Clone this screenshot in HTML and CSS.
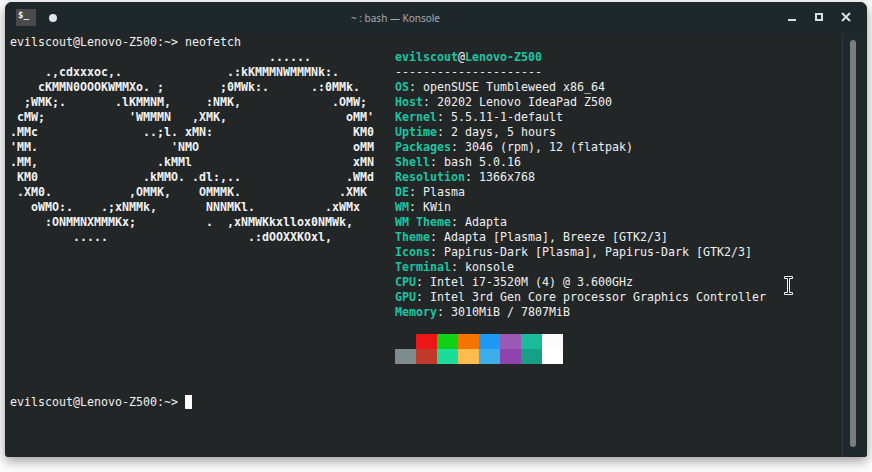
FILE: index.html
```html
<!DOCTYPE html>
<html lang="en">
<head>
<meta charset="utf-8">
<title>~ : bash — Konsole</title>
<link rel="stylesheet" href="styles.css">
</head>
<body>
<div class="window">
  <header class="titlebar">
    <div class="titlebar-left">
      <span class="app-icon">$_</span>
      <span class="pin"></span>
    </div>
    <div class="title">~ : bash — Konsole</div>
    <div class="controls">
      <svg class="ctl" width="10" height="10" viewBox="0 0 10 10"><rect x="1" y="7" width="8" height="2" fill="#d6e0e3"/></svg>
      <svg class="ctl" width="10" height="10" viewBox="0 0 10 10"><rect x="2" y="2" width="6" height="6" fill="none" stroke="#d6e0e3" stroke-width="2"/></svg>
      <svg class="ctl" width="10" height="10" viewBox="0 0 10 10"><path d="M1 1L9 9M9 1L1 9" stroke="#d6e0e3" stroke-width="2" fill="none"/></svg>
    </div>
  </header>
  <div class="body">
    <main class="terminal">
      <div class="line">evilscout@Lenovo-Z500:~&gt; neofetch</div>
      <div class="output">
<pre class="art">                                     ......
     .,cdxxxoc,.               .:kKMMMNWMMMNk:.
    cKMMN0OOOKWMMXo. ;        ;0MWk:.      .:0MMk.
  ;WMK;.       .lKMMNM,     :NMK,             .OMW;
 cMW;            'WMMMN   ,XMK,                 oMM'
.MMc               ..;l. xMN:                    KM0
'MM.                   'NMO                      oMM
.MM,                 .kMMl                       xMN
 KM0               .kMMO. .dl:,..               .WMd
 .XM0.           ,OMMK,    OMMMK.              .XMK
   oWMO:.    .;xNMMk,       NNNMKl.          .xWMx
     :ONMMNXMMMKx;          .  ,xNMWKkxllox0NMWk,
         .....                    .:dOOXXKOxl,</pre>
        <div class="info">
<pre class="facts"><b>evilscout</b>@<b>Lenovo-Z500</b>
---------------------
<b>OS</b>: openSUSE Tumbleweed x86_64
<b>Host</b>: 20202 Lenovo IdeaPad Z500
<b>Kernel</b>: 5.5.11-1-default
<b>Uptime</b>: 2 days, 5 hours
<b>Packages</b>: 3046 (rpm), 12 (flatpak)
<b>Shell</b>: bash 5.0.16
<b>Resolution</b>: 1366x768
<b>DE</b>: Plasma
<b>WM</b>: KWin
<b>WM Theme</b>: Adapta
<b>Theme</b>: Adapta [Plasma], Breeze [GTK2/3]
<b>Icons</b>: Papirus-Dark [Plasma], Papirus-Dark [GTK2/3]
<b>Terminal</b>: konsole
<b>CPU</b>: Intel i7-3520M (4) @ 3.600GHz
<b>GPU</b>: Intel 3rd Gen Core processor Graphics Controller
<b>Memory</b>: 3010MiB / 7807MiB</pre>
          <div class="palette">
            <i class="sw blank"></i><i class="sw c1"></i><i class="sw c2"></i><i class="sw c3"></i><i class="sw c4"></i><i class="sw c5"></i><i class="sw c6"></i><i class="sw c7"></i>
            <i class="sw c8"></i><i class="sw c9"></i><i class="sw c10"></i><i class="sw c11"></i><i class="sw c12"></i><i class="sw c13"></i><i class="sw c14"></i><i class="sw c15"></i>
          </div>
        </div>
      </div>
      <div class="line prompt">evilscout@Lenovo-Z500:~&gt; <span class="cursor"></span></div>
    </main>
    <aside class="scrollbar"><div class="thumb"></div></aside>
  </div>
  <svg class="ibeam" width="11" height="21" viewBox="0 0 11 21"><path d="M1.5 1.5H9.5V3.5H6.5V17.5H9.5V19.5H1.5V17.5H4.5V3.5H1.5Z" fill="#1a1a1a" stroke="#f2f2f2" stroke-width="1"/></svg>
</div>
</body>
</html>
```
FILE: styles.css
```css
* { box-sizing: border-box; }
html, body { margin: 0; height: 100%; }
body {
  width: 872px;
  height: 472px;
  overflow: hidden;
  background: #fcfcfc;
  padding: 2px 5px 15px 5px;
}
.window {
  position: relative;
  height: 455px;
  display: flex;
  flex-direction: column;
  background: #232627;
  border-radius: 7px 7px 3px 3px;
  box-shadow: 0 4px 12px rgba(0, 0, 0, .38);
  overflow: hidden;
}
.titlebar {
  height: 31px;
  flex: none;
  display: grid;
  grid-template-columns: 346px auto 1fr;
  align-items: center;
  background: #1e282c;
  color: #9fa8ab;
}
.titlebar-left { display: flex; align-items: center; gap: 13px; padding-left: 11px; }
.app-icon {
  width: 20px;
  height: 17px;
  background: #4a4a4a;
  color: #f2f2f2;
  font: bold 9px/13px "DejaVu Sans Mono", monospace;
  padding-left: 2px;
}
.pin { width: 8px; height: 8px; border-radius: 50%; background: #dfe5e8; }
.title { font: 10px "Noto Sans", sans-serif; color: #a3abae; }
.controls { display: flex; justify-content: flex-end; gap: 17px; padding-right: 16px; margin-top: -1px; }
.body { flex: 1; display: flex; min-height: 0; }
.terminal {
  flex: 1;
  padding: 2px 0 0 5px;
  font: 11.63px/15px "DejaVu Sans Mono", monospace;
  color: #eff0f1;
  border-right: 1px solid #31363a;
}
.line { height: 15px; white-space: pre; }
.output { display: flex; }
pre { margin: 0; font: inherit; }
.art { width: 385px; flex: none; font-weight: bold; color: #f2f3f4; }
.facts b { color: #1cc4a2; }
.palette {
  display: grid;
  grid-template-columns: repeat(8, 21px);
  grid-auto-rows: 15px;
  margin-top: 14px;
}
.sw { display: block; }
.blank { background: transparent; }
.c1 { background: #ed1515; }
.c2 { background: #11d116; }
.c3 { background: #f67400; }
.c4 { background: #1d99f3; }
.c5 { background: #9b59b6; }
.c6 { background: #1abc9c; }
.c7 { background: #fcfcfc; }
.c8 { background: #7f8c8d; }
.c9 { background: #c0392b; }
.c10 { background: #1cdc9a; }
.c11 { background: #fdbc4b; }
.c12 { background: #3daee9; }
.c13 { background: #8e44ad; }
.c14 { background: #16a085; }
.c15 { background: #ffffff; }
.prompt { margin-top: 31px; }
.cursor {
  display: inline-block;
  width: 7px;
  height: 14px;
  background: #fcfcfc;
  vertical-align: top;
}
.scrollbar { width: 24px; flex: none; background: #1f282b; padding: 7px 0 10px 7px; }
.thumb { width: 6px; height: 100%; border-radius: 3px; background: #7b7c7d; }
.ibeam { position: absolute; left: 778px; top: 273px; }
```
